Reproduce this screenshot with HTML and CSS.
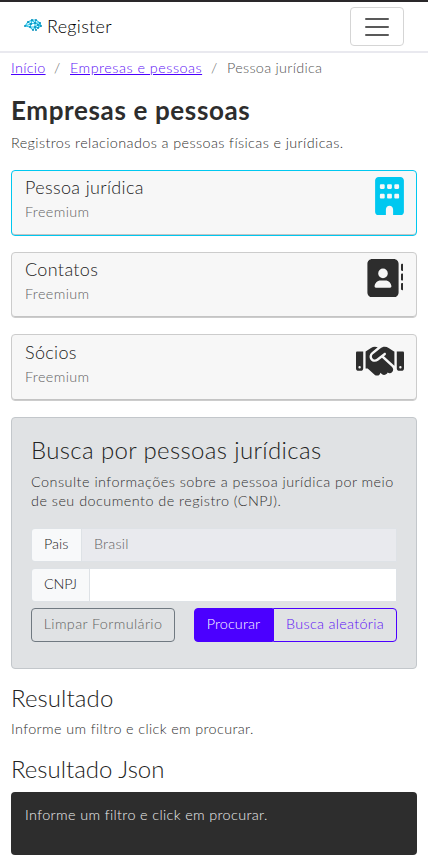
FILE: index.html
```html
<!DOCTYPE html>
<html lang="pt-BR">
<head>
<meta charset="utf-8">
<meta name="viewport" content="width=device-width, initial-scale=1">
<title>Register</title>
<link rel="stylesheet" href="styles.css">
</head>
<body>
<header class="navbar">
  <a class="brand" href="#">
    <svg class="logo" viewBox="0 0 18 14">
      <path class="logo-lines" d="M1 8L4 4L8 2L12 2L16 5L17 8L14 10L11 9L9 12L6 9L1 8M4 4L7 6L8 2L11 5L12 2M7 6L6 9L11 9L11 5L16 5L14 10M1 8L7 6L11 5L17 8M12 12L11 9L14 7"/>
      <path class="logo-dots" d="M1 8h.01M4 4h.01M8 2h.01M12 2h.01M16 5h.01M17 8h.01M14 10h.01M9 12h.01M6 9h.01M7 6h.01M11 5h.01M11 9h.01M14 7h.01M12 12h.01"/>
    </svg>
    <span class="brand-name">Register</span>
  </a>
  <button class="toggler" aria-label="Menu">
    <svg viewBox="0 0 30 30"><path d="M4 7h22M4 15h22M4 23h22"/></svg>
  </button>
</header>
<main class="page">
  <nav class="breadcrumb">
    <a class="crumb-home" href="#">Início</a><span class="sep">/</span><a class="crumb-section" href="#">Empresas e pessoas</a><span class="sep">/</span><span class="crumb-current">Pessoa jurídica</span>
  </nav>
  <h1 class="title">Empresas e pessoas</h1>
  <p class="lead">Registros relacionados a pessoas físicas e jurídicas.</p>

  <section class="cards">
    <article class="card card-active">
      <div><h2 class="card-title">Pessoa jurídica</h2><p class="card-plan">Freemium</p></div>
      <svg class="icon icon-building" viewBox="0 0 384 512"><path d="M48 0C21.5 0 0 21.5 0 48V464c0 26.5 21.5 48 48 48h96V432c0-26.5 21.5-48 48-48s48 21.5 48 48v80h96c26.5 0 48-21.5 48-48V48c0-26.5-21.5-48-48-48H48zM64 240c0-8.8 7.2-16 16-16h32c8.8 0 16 7.2 16 16v32c0 8.8-7.2 16-16 16H80c-8.8 0-16-7.2-16-16V240zm112-16h32c8.8 0 16 7.2 16 16v32c0 8.8-7.2 16-16 16H176c-8.8 0-16-7.2-16-16V240c0-8.8 7.2-16 16-16zm80 16c0-8.8 7.2-16 16-16h32c8.8 0 16 7.2 16 16v32c0 8.8-7.2 16-16 16H272c-8.8 0-16-7.2-16-16V240zM80 96h32c8.8 0 16 7.2 16 16v32c0 8.8-7.2 16-16 16H80c-8.8 0-16-7.2-16-16V112c0-8.8 7.2-16 16-16zm80 16c0-8.8 7.2-16 16-16h32c8.8 0 16 7.2 16 16v32c0 8.8-7.2 16-16 16H176c-8.8 0-16-7.2-16-16V112zM272 96h32c8.8 0 16 7.2 16 16v32c0 8.8-7.2 16-16 16H272c-8.8 0-16-7.2-16-16V112c0-8.8 7.2-16 16-16z"/></svg>
    </article>
    <article class="card">
      <div><h2 class="card-title">Contatos</h2><p class="card-plan">Freemium</p></div>
      <svg class="icon icon-book" viewBox="0 0 512 512"><path d="M96 0C60.7 0 32 28.7 32 64V448c0 35.3 28.7 64 64 64H384c35.3 0 64-28.7 64-64V64c0-35.3-28.7-64-64-64H96zM208 288h64c44.2 0 80 35.8 80 80c0 8.8-7.2 16-16 16H144c-8.8 0-16-7.2-16-16c0-44.2 35.8-80 80-80zm-32-96a64 64 0 1 1 128 0 64 64 0 1 1 -128 0zM512 80c0-8.8-7.2-16-16-16s-16 7.2-16 16v64c0 8.8 7.2 16 16 16s16-7.2 16-16V80zM496 192c-8.8 0-16 7.2-16 16v64c0 8.8 7.2 16 16 16s16-7.2 16-16V208c0-8.8-7.2-16-16-16zm16 144c0-8.8-7.2-16-16-16s-16 7.2-16 16v64c0 8.8 7.2 16 16 16s16-7.2 16-16V336z"/></svg>
    </article>
    <article class="card card-last">
      <div><h2 class="card-title">Sócios</h2><p class="card-plan">Freemium</p></div>
      <svg class="icon icon-shake" viewBox="0 0 640 512"><path d="M323.4 85.2l-96.8 78.4c-16.1 13-19.2 36.4-7 53.1c12.9 17.8 38 21.3 55.3 7.8l99.3-77.2c7-5.4 17-4.2 22.5 2.8s4.2 17-2.8 22.5l-20.9 16.2L512 316.8V128h-.7l-3.9-2.5L434.8 79c-15.3-9.8-33.2-15-51.4-15c-21.8 0-43 7.5-60 21.2zm22.8 124.4l-51.7 40.2C263 274.3 217.3 268 193.7 235.6c-22.2-30.5-16.6-73.1 12.7-96.8l83.2-67.3c-11.6-4.9-24.1-7.4-36.8-7.4C234 64 215.7 69.6 200 80l-72 48V352h28.2l91.4 83.4c19.6 17.9 49.9 16.5 67.8-3.1c5.5-6.1 9.2-13.2 11.1-20.6l17 15.6c19.5 17.9 49.9 16.6 67.8-2.9c4.5-4.9 7.8-10.6 9.9-16.5c19.4 13 45.8 10.3 62.1-7.5c17.9-19.5 16.6-49.9-2.9-67.8l-134.2-123zM16 128c-8.8 0-16 7.2-16 16V352c0 17.7 14.3 32 32 32H64c17.7 0 32-14.3 32-32V128H16zM48 320a16 16 0 1 1 0 32 16 16 0 1 1 0-32zM544 128V352c0 17.7 14.3 32 32 32h32c17.7 0 32-14.3 32-32V144c0-8.8-7.2-16-16-16H544zm32 208a16 16 0 1 1 32 0 16 16 0 1 1 -32 0z"/></svg>
    </article>
  </section>

  <section class="panel">
    <h2 class="heading panel-heading">Busca por pessoas jurídicas</h2>
    <p class="panel-text">Consulte informações sobre a pessoa jurídica por meio<br><span class="panel-text-end">de seu documento de registro (CNPJ).</span></p>
    <div class="field"><span class="field-label">Pais</span><span class="field-value disabled">Brasil</span></div>
    <div class="field"><span class="field-label label-cnpj">CNPJ</span><span class="field-value"></span></div>
    <div class="actions">
      <button class="btn btn-clear">Limpar Formulário</button>
      <div class="btn-group"><button class="btn btn-search">Procurar</button><button class="btn btn-random">Busca aleatória</button></div>
    </div>
  </section>

  <h2 class="heading result-heading">Resultado</h2>
  <p class="result-text">Informe um filtro e click em procurar.</p>
  <h2 class="heading json-heading">Resultado Json</h2>
  <div class="json"><p class="json-text">Informe um filtro e click em procurar.</p></div>
</main>
</body>
</html>
```
FILE: styles.css
```css
* { box-sizing: border-box; margin: 0; }
body { background: #fff; color: #303030; font: 300 14.4px/20px Lato, "Open Sans", sans-serif; border-top: 2px solid #2a282a; }
svg { display: block; }
button { font: inherit; background: none; padding: 0; }
.navbar { height: 51px; padding: 0 24px; border-bottom: 2px solid #e9e9ef; display: flex; align-items: center; justify-content: space-between; }
.brand { display: flex; align-items: center; gap: 5px; color: #000; text-decoration: none; }
.brand-name { font-size: 18px; line-height: 24px; letter-spacing: .3px; padding-bottom: 2px; }
.logo { width: 18px; height: 14px; fill: none; stroke-linecap: round; margin-bottom: 3px; }
.logo-lines { stroke: #2bc4ea; stroke-width: 1.1; }
.logo-dots { stroke: #078ab5; stroke-width: 1.8; }
.toggler { width: 54px; height: 39px; border: 1px solid #d5d5d5; border-radius: 4px; display: flex; align-items: center; justify-content: center; }
.toggler svg { width: 30px; height: 30px; fill: none; stroke: #595959; stroke-width: 2; stroke-linecap: round; }
.page { padding: 5px 11px 0; }
.breadcrumb { display: flex; height: 20px; letter-spacing: .5px; white-space: nowrap; }
.breadcrumb a { color: #5c10f5; text-decoration: underline; text-decoration-color: #4b00ff; }
.crumb-home { width: 34px; letter-spacing: .3px; }
.crumb-section { width: 132px; }
.sep { color: #666; width: 25px; text-align: center; }
.crumb-current { color: #555; letter-spacing: .3px; }
.title { margin-top: 15px; font-size: 26px; line-height: 34px; font-weight: 700; color: #2d2d2d; letter-spacing: .63px; }
.lead { margin-top: 6px; letter-spacing: .4px; }
.cards { margin-top: 17px; display: grid; gap: 16px; }
.card { height: 66px; padding: 5px 12px 0 13px; border: 1px solid #ccc; border-radius: 4px; background: #f7f7f7; box-shadow: inset 0 -1px 0 #c4c4c4; display: flex; justify-content: space-between; }
.card-active { border-color: #00c8f0; }
.card-last { height: 67px; padding-top: 6px; }
.card-title { font-size: 18px; line-height: 22px; font-weight: 300; color: #222; letter-spacing: .35px; }
.card-plan { margin-top: 4px; line-height: 20px; color: #626262; letter-spacing: .38px; }
.icon { height: 38.4px; fill: #2d2d2d; margin-top: 1px; }
.icon-building { width: 29px; fill: #00c8f0; }
.icon-book { width: 38.4px; margin-right: 1px; }
.icon-shake { width: 48px; }
.heading { font-size: 24px; line-height: 30px; font-weight: 300; color: #222; letter-spacing: 0; }
.panel { margin-top: 16px; height: 252px; padding: 17px 19px; border: 1px solid #c3c7cb; border-radius: 4px; background: #e0e2e4; }
.panel-heading { letter-spacing: .36px; }
.panel-text { margin-top: 7px; line-height: 19px; letter-spacing: .48px; margin-bottom: 18px; white-space: nowrap; }
.field { display: flex; height: 34px; margin-bottom: 6px; border: 1px solid #dee2e6; border-radius: 4px 0 0 4px; overflow: hidden; line-height: 30px; }
.field-label { padding: 0 12px; width: 50px; background: #f8f9fa; color: #222; border-right: 1px solid #dee2e6; }
.label-cnpj { width: 58px; letter-spacing: -.2px; }
.field-value { flex: 1; padding: 0 12px; background: #fff; }
.disabled { background: #e9eaee; color: #626262; letter-spacing: .2px; }
.actions { display: flex; justify-content: space-between; margin-top: 5px; }
.btn { height: 34px; border: 1px solid; border-radius: 4px; letter-spacing: .38px; white-space: nowrap; padding-bottom: 2px; }
.btn-clear { width: 144px; border-color: #707981; color: #626262; }
.btn-group { display: flex; }
.btn-search { width: 79px; border-color: #4b00ff; background: #4b00ff; color: #fff; border-radius: 4px 0 0 4px; letter-spacing: .1px; }
.btn-random { width: 124px; border-color: #4b00ff; color: #5c10f5; border-radius: 0 4px 4px 0; letter-spacing: .3px; }
.result-heading { margin-top: 14px; letter-spacing: .1px; }
.result-text { margin-top: 6px; letter-spacing: .37px; }
.json-heading { margin-top: 15px; }
.json { margin-top: 8px; height: 63px; padding: 13px 14px; border-radius: 4px; background: #2d2d2d; color: #eee; letter-spacing: .37px; }
```
